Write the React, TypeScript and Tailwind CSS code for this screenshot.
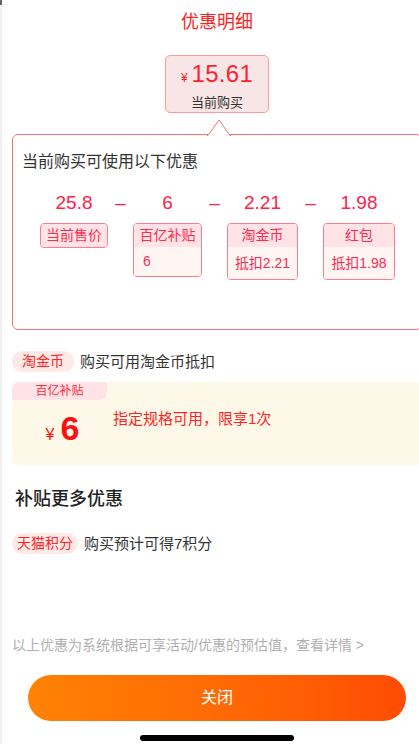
import React from "react";

const cols = [
  { w: "w-[68px]", value: "25.8", title: "当前售价", body: null as string | null, h: "" },
  { w: "w-[69px]", value: "6", title: "百亿补贴", body: "6", h: "h-[54px]" },
  { w: "w-[71px]", value: "2.21", title: "淘金币", body: "抵扣2.21", h: "h-[57px]" },
  { w: "w-[72px]", value: "1.98", title: "红包", body: "抵扣1.98", h: "h-[57px]" },
];

export default function App() {
  return (
    <div className="w-[419px] h-[744px] overflow-hidden bg-white flex font-['Liberation_Sans','Noto_Sans_CJK_SC',sans-serif]">
      <div className="w-[2px] shrink-0 bg-[#f0f0f0] flex flex-col">
        <div className="h-[5px] bg-[#666]" />
      </div>
      <div className="w-[430px] shrink-0 flex flex-col">
        {/* title */}
        <div className="mt-[10px] text-center text-[18px] leading-[24px] text-[#ff1f1f]">优惠明细</div>

        {/* price box */}
        <div className="mt-[21px] mx-auto w-[104px] h-[58px] rounded-[5px] border border-[#ff9a9a] bg-[#f8e5e5] flex flex-col items-center">
          <div className="mt-[5px] flex items-baseline leading-[26px] text-[#ff1f2f]">
            <span className="text-[12px]">¥</span>
            <span className="ml-[4px] text-[24px] tracking-[0.3px]">15.61</span>
          </div>
          <div className="mt-[3px] text-[13px] leading-[18px] text-[#333]">当前购买</div>
        </div>

        {/* big box */}
        <div className="relative mt-[21px] ml-[10px] mr-[10px] h-[196px] rounded-[6px] border border-[#ff6f6f] pl-[9px] pt-[16px]">
          <svg className="absolute top-[-16px] left-[194px]" width="24" height="17" viewBox="0 0 24 17">
            <polygon points="1,16 12,1 23,16" fill="#ffffff" />
            <rect x="0" y="16" width="24" height="1.5" fill="#ffffff" />
            <polyline points="0,16.5 1,16.5 12,1 23,16.5 24,16.5" fill="none" stroke="#ff6f6f" strokeWidth="1" />
          </svg>
          <div className="text-[16px] leading-[22px] text-[#333]">当前购买可使用以下优惠</div>
          <div className="ml-[18px] mt-[18px] flex items-start">
            {cols.map((c, i) => (
              <React.Fragment key={i}>
                {i > 0 && (
                  <div className="w-[25px] shrink-0 flex justify-center text-[19px] leading-[24px] text-[#ff2147]">–</div>
                )}
                <div className={`${c.w} shrink-0 flex flex-col`}>
                  <div className="text-center text-[19px] leading-[24px] text-[#ff2147]">{c.value}</div>
                  <div
                    className={`mt-[8px] ${c.h} rounded-[4px] border border-[#ff7d8a] overflow-hidden flex flex-col text-[#ff2a4f]`}
                  >
                    <div className="h-[23px] shrink-0 bg-[#ffe3e6] flex items-center justify-center text-[14px]">
                      {c.title}
                    </div>
                    {c.body && (
                      <div
                        className={`flex-1 bg-[#fff5f3] flex items-center text-[14px] ${
                          i === 1 ? "justify-start pl-[9px]" : "justify-center"
                        }`}
                      >
                        {c.body}
                      </div>
                    )}
                  </div>
                </div>
              </React.Fragment>
            ))}
          </div>
        </div>

        {/* tao coin row */}
        <div className="mt-[21px] ml-[10px] flex items-center">
          <div className="h-[21px] px-[10px] rounded-full bg-[#fde9e6] flex items-center text-[14px] text-[#ff2424]">淘金币</div>
          <div className="ml-[6px] text-[15px] leading-[21px] text-[#333]">购买可用淘金币抵扣</div>
        </div>

        {/* yellow card */}
        <div className="mt-[10px] ml-[10px] mr-[10px] h-[83px] rounded-[6px] bg-[#fef8e8] flex flex-col overflow-hidden">
          <div className="w-[95px] h-[18px] rounded-br-[8px] bg-[#ffe3e6] flex items-center justify-center text-[12px] text-[#ff2a3a]">
            百亿补贴
          </div>
          <div className="flex items-start">
            <div className="w-[101px] shrink-0 mt-[11px] flex justify-center items-baseline leading-none text-[#ff0f0f]">
              <span className="text-[16px]">¥</span>
              <span className="ml-[6px] text-[34px] font-bold leading-[34px]">6</span>
            </div>
            <div className="mt-[9px] text-[15px] leading-[20px] text-[#ff2424]">指定规格可用，限享1次</div>
          </div>
        </div>

        {/* more */}
        <div className="mt-[22px] ml-[13px] text-[18px] leading-[24px] font-medium text-[#222]">补贴更多优惠</div>

        <div className="mt-[22px] ml-[10px] flex items-center">
          <div className="h-[21px] px-[5px] rounded-full bg-[#fde9e6] flex items-center text-[14px] text-[#ff2424]">天猫积分</div>
          <div className="ml-[6px] text-[15px] leading-[21px] text-[#333]">购买预计可得7积分</div>
        </div>

        <div className="mt-[81px] ml-[10px] text-[14px] leading-[20px] text-[#b0b0b0] whitespace-nowrap">
          以上优惠为系统根据可享活动/优惠的预估值，查看详情 &gt;
        </div>

        <div className="mt-[20px] mx-[26px] h-[46px] rounded-full bg-gradient-to-r from-[#ff8205] to-[#ff4c03] flex items-center justify-center text-[16px] text-white">
          关闭
        </div>

        <div className="mt-[14px] mx-auto w-[154px] h-[6px] rounded-full bg-black" />
      </div>
    </div>
  );
}
